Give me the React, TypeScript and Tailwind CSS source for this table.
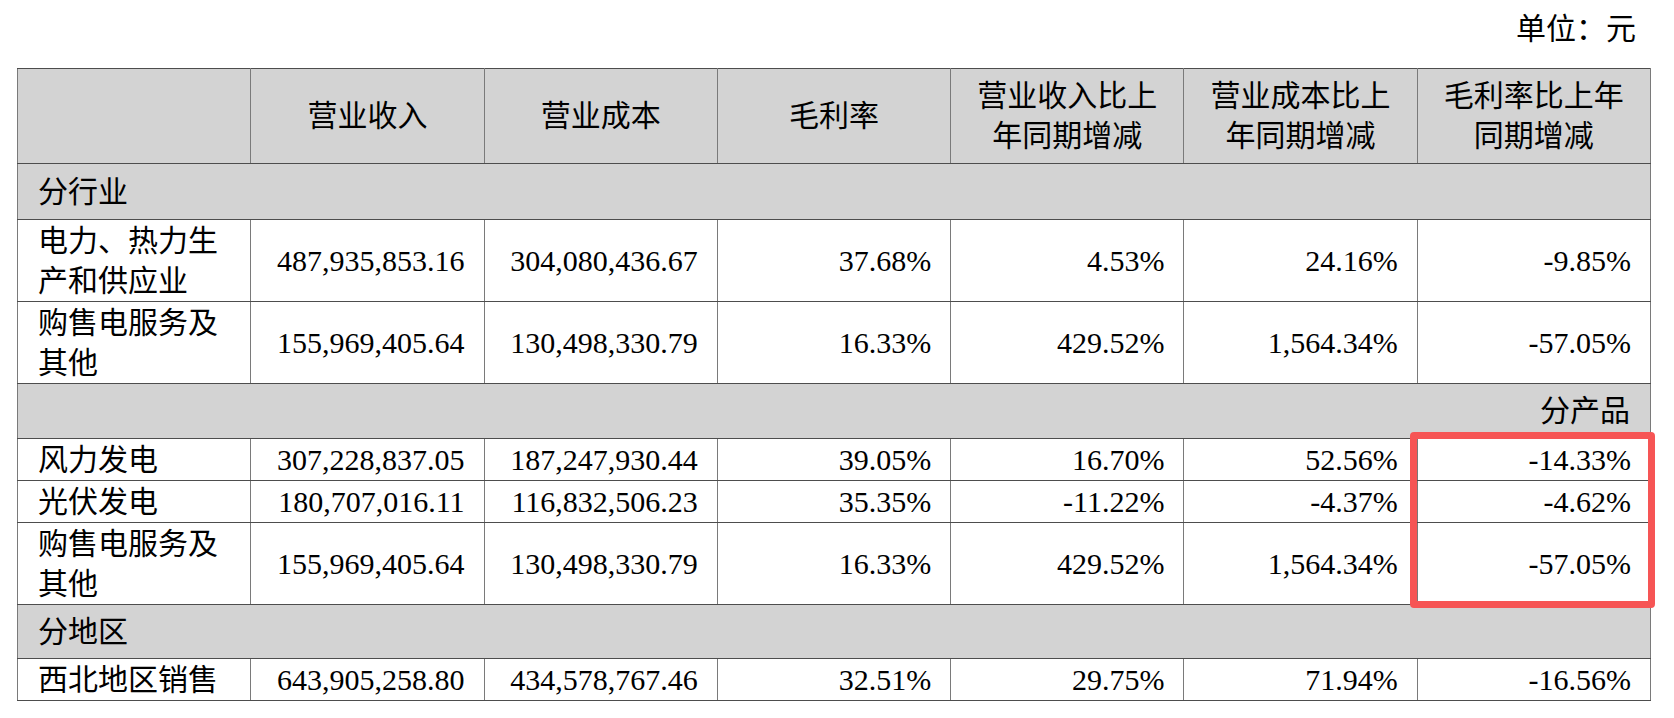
import React from "react";

type Row =
  | { kind: "section"; label: string; align: "left" | "right" }
  | { kind: "data"; label: React.ReactNode; cells: string[]; h: string };

const HEADERS: React.ReactNode[] = [
  "",
  "营业收入",
  "营业成本",
  "毛利率",
  <>
    营业收入比上
    <br />
    年同期增减
  </>,
  <>
    营业成本比上
    <br />
    年同期增减
  </>,
  <>
    毛利率比上年
    <br />
    同期增减
  </>,
];

const ROWS: Row[] = [
  { kind: "section", label: "分行业", align: "left" },
  {
    kind: "data",
    label: (
      <>
        电力、热力生
        <br />
        产和供应业
      </>
    ),
    cells: ["487,935,853.16", "304,080,436.67", "37.68%", "4.53%", "24.16%", "-9.85%"],
    h: "h-[82px]",
  },
  {
    kind: "data",
    label: (
      <>
        购售电服务及
        <br />
        其他
      </>
    ),
    cells: ["155,969,405.64", "130,498,330.79", "16.33%", "429.52%", "1,564.34%", "-57.05%"],
    h: "h-[82px]",
  },
  { kind: "section", label: "分产品", align: "right" },
  {
    kind: "data",
    label: "风力发电",
    cells: ["307,228,837.05", "187,247,930.44", "39.05%", "16.70%", "52.56%", "-14.33%"],
    h: "h-[42px]",
  },
  {
    kind: "data",
    label: "光伏发电",
    cells: ["180,707,016.11", "116,832,506.23", "35.35%", "-11.22%", "-4.37%", "-4.62%"],
    h: "h-[42px]",
  },
  {
    kind: "data",
    label: (
      <>
        购售电服务及
        <br />
        其他
      </>
    ),
    cells: ["155,969,405.64", "130,498,330.79", "16.33%", "429.52%", "1,564.34%", "-57.05%"],
    h: "h-[82px]",
  },
  { kind: "section", label: "分地区", align: "left" },
  {
    kind: "data",
    label: "西北地区销售",
    cells: ["643,905,258.80", "434,578,767.46", "32.51%", "29.75%", "71.94%", "-16.56%"],
    h: "h-[42px]",
  },
];

const cellBorder = "border-y border-y-[#4d4d4d] border-x border-x-[#7a7a7a]";

export default function App() {
  return (
    <div
      className="w-[1674px] h-[718px] overflow-hidden bg-white pl-[17px] pt-[9px] text-[30px] leading-[40px] text-black"
      style={{ fontFamily: '"Liberation Serif", "Noto Sans CJK SC", serif' }}
    >
      <div className="w-[1634px]">
        <div className="h-[40px] pr-[15px] text-right">单位：元</div>

        <div className="relative mt-[19px]">
          <table className="w-[1634px] table-fixed border-collapse">
            <thead>
              <tr className="h-[95px] bg-[#d3d3d3]">
                {HEADERS.map((h, i) => (
                  <th key={i} className={`${cellBorder} px-[19px] py-0 text-center font-normal`}>
                    {h}
                  </th>
                ))}
              </tr>
            </thead>
            <tbody>
              {ROWS.map((row, i) =>
                row.kind === "section" ? (
                  <tr key={i} className={`bg-[#d3d3d3] ${row.label === "分产品" ? "h-[55px]" : i === 0 ? "h-[56px]" : "h-[54px]"}`}>
                    <td
                      colSpan={7}
                      className={`${cellBorder} px-[20px] py-0 ${row.align === "right" ? "text-right" : "text-left"}`}
                    >
                      {row.label}
                    </td>
                  </tr>
                ) : (
                  <tr key={i} className={row.h}>
                    <td className={`${cellBorder} px-[20px] py-0 text-left`}>{row.label}</td>
                    {row.cells.map((c, j) => (
                      <td key={j} className={`${cellBorder} px-[19px] py-0 text-right whitespace-nowrap`}>
                        {c}
                      </td>
                    ))}
                  </tr>
                )
              )}
            </tbody>
          </table>

          {/* highlight around the last column of 分产品 */}
          <div className="pointer-events-none absolute left-[1393px] top-[364px] h-[176px] w-[245px] rounded-[4px] border-[7px] border-[#f65555]" />
        </div>
      </div>
    </div>
  );
}
